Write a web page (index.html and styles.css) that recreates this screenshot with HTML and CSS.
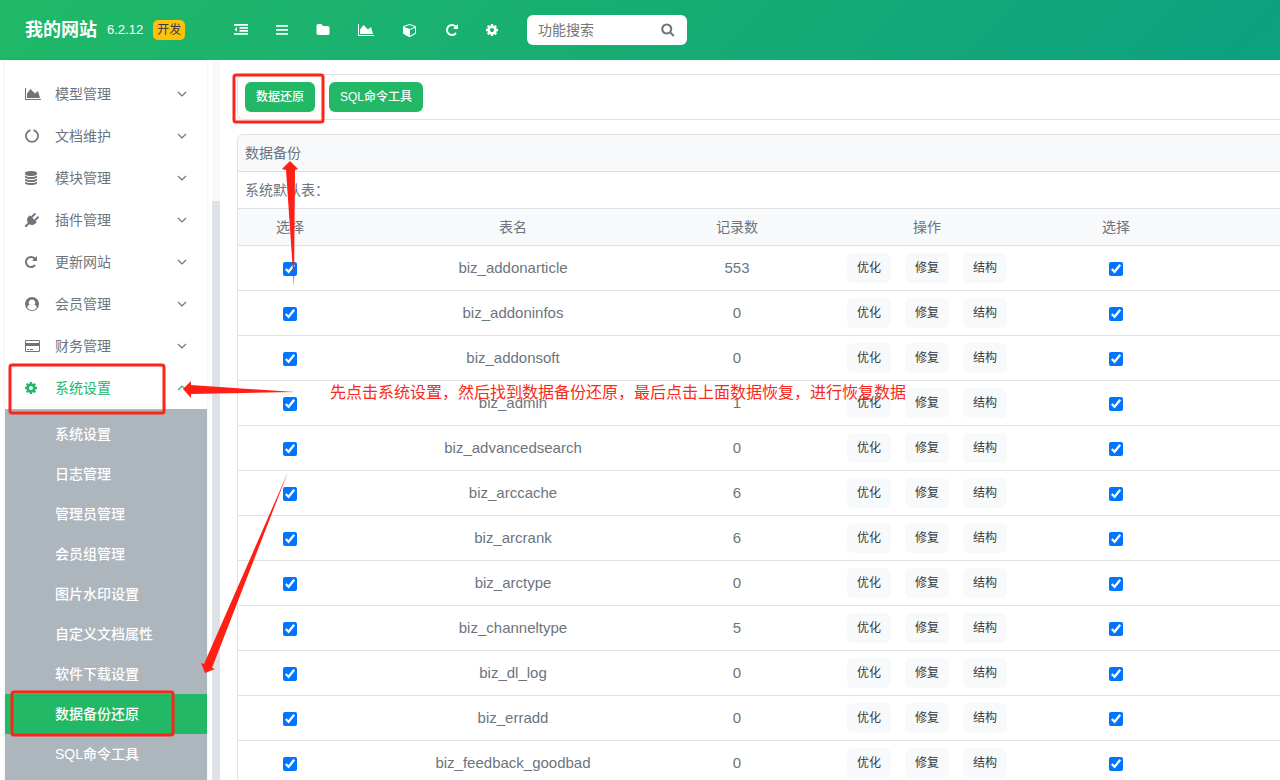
FILE: index.html
```html
<!DOCTYPE html>
<html lang="zh-CN">
<head>
<meta charset="utf-8">
<title>我的网站</title>
<link rel="stylesheet" href="styles.css">
</head>
<body>
<svg class="sprite" aria-hidden="true">
  <symbol id="i-area" viewBox="0 0 2048 1792"><path d="M2048 1536v128h-2048v-1536h128v1408h1920zm-384-1024l256 896h-1664v-576l448-576 576 576z"/></symbol>
  <symbol id="i-outdent" viewBox="0 0 1792 1792"><path d="M0 128h1792v224H0zM704 512h1088v224H704zM704 896h1088v224H704zM0 1280h1792v224H0zM384 512v608L64 816z"/></symbol>
  <symbol id="i-bars" viewBox="0 0 1536 1792"><path d="M0 256h1536v224H0zM0 768h1536v224H0zM0 1280h1536v224H0z"/></symbol>
  <symbol id="i-folder" viewBox="0 0 1792 1792"><path d="M1728 608v704q0 92-66 158t-158 66h-1216q-92 0-158-66t-66-158v-960q0-92 66-158t158-66h320q92 0 158 66t66 158v32h672q92 0 158 66t66 158z"/></symbol>
  <symbol id="i-cube" viewBox="0 0 1792 1792"><path d="M896 1629l640-349v-636l-640 233v752zm-64-865l698-254-698-254-698 254zm832-252v768q0 35-18 65t-49 47l-704 384q-28 16-61 16t-61-16l-704-384q-31-17-49-47t-18-65v-768q0-40 23-73t61-47l704-256q22-8 44-8t44 8l704 256q38 14 61 47t23 73z"/></symbol>
  <symbol id="i-repeat" viewBox="128 0 1536 1792"><path d="M1664 256v448q0 26-19 45t-45 19h-448q-42 0-59-40-17-39 14-69l138-138q-148-137-349-137-104 0-198.500 40.500t-163.500 109.500-109.500 163.500-40.500 198.500 40.500 198.500 109.500 163.500 163.500 109.500 198.500 40.500q119 0 225-52t179-147q7-10 23-12 15 0 25 9l137 138q9 8 9.500 20.500t-7.500 22.500q-109 132-264 204.500t-327 72.500q-156 0-298-61t-245-164-164-245-61-298 61-298 164-245 245-164 298-61q147 0 284.500 55.500t244.500 156.500l130-129q29-31 70-14 39 17 39 59z"/></symbol>
  <symbol id="i-cog" viewBox="128 0 1536 1792"><path d="M1152 896q0-106-75-181t-181-75-181 75-75 181 75 181 181 75 181-75 75-181zm512-109v222q0 12-8 23t-20 13l-185 28q-19 54-39 91 35 50 107 138 10 12 10 25t-9 23q-27 37-99 108t-94 71q-12 0-26-9l-138-108q-44 23-91 38-16 136-29 186-7 28-36 28h-222q-14 0-24.500-8.500t-11.500-21.500l-28-184q-49-16-90-37l-141 107q-10 9-25 9-14 0-25-11-126-114-165-168-7-10-7-23 0-12 8-23 15-21 51-66.500t54-70.500q-27-50-41-99l-183-27q-13-2-21-12.500t-8-23.500v-222q0-12 8-23t19-13l186-28q14-46 39-92-40-57-107-138-10-12-10-24 0-10 9-23 26-36 98.500-107.500t94.500-71.500q13 0 26 10l138 107q44-23 91-38 16-136 29-186 7-28 36-28h222q14 0 24.500 8.500t11.500 21.500l28 184q49 16 90 37l142-107q9-9 24-9 13 0 25 10 129 119 165 170 7 8 7 22 0 12-8 23-15 21-51 66.500t-54 70.500q26 50 41 98l183 28q13 2 21 12.500t8 23.500z"/></symbol>
  <symbol id="i-search" viewBox="64 64 1728 1792"><path d="M1216 832q0-185-131.500-316.500t-316.500-131.500-316.500 131.500-131.500 316.500 131.500 316.500 316.500 131.500 316.500-131.500 131.500-316.500zm512 832q0 52-38 90t-90 38q-54 0-90-38l-343-342q-179 124-399 124-143 0-273.500-55.500t-225-150-150-225-55.500-273.500 55.500-273.500 150-225 225-150 273.500-55.500 273.500 55.500 225 150 150 225 55.500 273.500q0 220-124 399l343 343q37 37 37 90z"/></symbol>
  <symbol id="i-notch" viewBox="0 0 14 14"><path d="M5.500 1.100A6 6 0 1 0 8.500 1.100" fill="none" stroke="currentColor" stroke-width="1.700"/></symbol>
  <symbol id="i-database" viewBox="128 0 1536 1792"><path d="M896 768q237 0 443-43t325-127v170q0 69-103 128t-280 93.500-385 34.500-385-34.500-280-93.500-103-128v-170q119 84 325 127t443 43zm0 768q237 0 443-43t325-127v170q0 69-103 128t-280 93.500-385 34.500-385-34.500-280-93.500-103-128v-170q119 84 325 127t443 43zm0-384q237 0 443-43t325-127v170q0 69-103 128t-280 93.500-385 34.500-385-34.500-280-93.500-103-128v-170q119 84 325 127t443 43zm0-1152q208 0 385 34.500t280 93.500 103 128v128q0 69-103 128t-280 93.500-385 34.500-385-34.500-280-93.500-103-128v-128q0-69 103-128t280-93.500 385-34.500z"/></symbol>
  <symbol id="i-plug" viewBox="0 0 1792 1792"><path d="M1755 453q37 38 37 90.500t-37 90.500l-401 400 150 150-160 160q-163 163-389.500 186.500t-411.500-100.500l-362 362h-181v-181l362-362q-124-185-100.500-411.500t186.500-389.500l160-160 150 150 400-401q38-37 91-37t90 37 37 90.500-37 90.500l-400 401 234 234 401-400q38-37 91-37t90 37z"/></symbol>
  <symbol id="i-user" viewBox="0 0 14 14"><path fill-rule="evenodd" d="M7 0a7 7 0 1 1 0 14A7 7 0 0 1 7 0zM7 2.500A3.200 3.200 0 0 0 4.700 8C3.200 8.200 2.300 9.200 2.100 10.600A6 6 0 0 0 11.900 10.600C11.700 9.200 10.800 8.200 9.300 8A3.200 3.200 0 0 0 7 2.500z"/></symbol>
  <symbol id="i-card" viewBox="0 0 15 14"><path fill-rule="evenodd" d="M1.300 1h12.400A1.300 1.300 0 0 1 15 2.300v9.400A1.300 1.300 0 0 1 13.700 13H1.300A1.300 1.300 0 0 1 0 11.700V2.300A1.300 1.300 0 0 1 1.300 1zM1 2v2h13V2zM1 7v5h13V7zM2 10h2v1H2zM5 10h3v1H5z"/></symbol>
  <symbol id="i-down" viewBox="0 0 10 10"><path d="M1 3l4 4 4-4" fill="none" stroke="currentColor" stroke-width="1.200"/></symbol>
  <symbol id="i-up" viewBox="0 0 10 10"><path d="M1 7l4-4 4 4" fill="none" stroke="currentColor" stroke-width="1.200"/></symbol>
</svg>

<header class="topbar">
  <div class="brand">
    <strong class="brand-name">我的网站</strong>
    <span class="version">6.2.12</span>
    <span class="badge">开发</span>
  </div>
  <nav class="tools" aria-label="快捷工具">
    <button type="button" aria-label="收起菜单"><svg class="icon"><use href="#i-outdent"/></svg></button>
    <button type="button" aria-label="菜单"><svg class="icon icon-narrow"><use href="#i-bars"/></svg></button>
    <button type="button" aria-label="文件"><svg class="icon"><use href="#i-folder"/></svg></button>
    <button type="button" aria-label="统计"><svg class="icon icon-wide"><use href="#i-area"/></svg></button>
    <button type="button" aria-label="模块"><svg class="icon icon-wide"><use href="#i-cube"/></svg></button>
    <button type="button" aria-label="刷新"><svg class="icon icon-narrow"><use href="#i-repeat"/></svg></button>
    <button type="button" aria-label="设置"><svg class="icon icon-narrow"><use href="#i-cog"/></svg></button>
  </nav>
  <form class="search" role="search">
    <input type="text" placeholder="功能搜索" aria-label="功能搜索">
    <button type="button" aria-label="搜索"><svg class="icon"><use href="#i-search"/></svg></button>
  </form>
</header>

<div class="layout">
  <nav class="sidebar" aria-label="主菜单">
    <a class="item" href="#"><span class="mark"><svg class="icon icon-wide"><use href="#i-area"/></svg></span><span class="label">模型管理</span><svg class="caret"><use href="#i-down"/></svg></a>
    <a class="item" href="#"><span class="mark"><svg class="icon"><use href="#i-notch"/></svg></span><span class="label">文档维护</span><svg class="caret"><use href="#i-down"/></svg></a>
    <a class="item" href="#"><span class="mark"><svg class="icon icon-narrow"><use href="#i-database"/></svg></span><span class="label">模块管理</span><svg class="caret"><use href="#i-down"/></svg></a>
    <a class="item" href="#"><span class="mark"><svg class="icon"><use href="#i-plug"/></svg></span><span class="label">插件管理</span><svg class="caret"><use href="#i-down"/></svg></a>
    <a class="item" href="#"><span class="mark"><svg class="icon icon-narrow"><use href="#i-repeat"/></svg></span><span class="label">更新网站</span><svg class="caret"><use href="#i-down"/></svg></a>
    <a class="item" href="#"><span class="mark"><svg class="icon"><use href="#i-user"/></svg></span><span class="label">会员管理</span><svg class="caret"><use href="#i-down"/></svg></a>
    <a class="item" href="#"><span class="mark"><svg class="icon icon-card"><use href="#i-card"/></svg></span><span class="label">财务管理</span><svg class="caret"><use href="#i-down"/></svg></a>
    <a class="item open" href="#"><span class="mark"><svg class="icon icon-narrow"><use href="#i-cog"/></svg></span><span class="label">系统设置</span><svg class="caret"><use href="#i-up"/></svg></a>
    <div class="submenu">
      <a href="#">系统设置</a>
      <a href="#">日志管理</a>
      <a href="#">管理员管理</a>
      <a href="#">会员组管理</a>
      <a href="#">图片水印设置</a>
      <a href="#">自定义文档属性</a>
      <a href="#">软件下载设置</a>
      <a class="current" href="#">数据备份还原</a>
      <a href="#">SQL命令工具</a>
    </div>
  </nav>
  <div class="track"><div class="thumb"></div></div>

  <main class="content">
    <div class="actions">
      <button type="button">数据还原</button>
      <button type="button">SQL命令工具</button>
    </div>
    <section class="panel">
      <h1 class="panel-title">数据备份</h1>
      <p class="panel-note">系统默认表：</p>
      <table class="tables">
        <colgroup><col class="c-pick"><col class="c-name"><col class="c-count"><col class="c-ops"><col class="c-pick"><col></colgroup>
        <thead><tr><th>选择</th><th>表名</th><th>记录数</th><th>操作</th><th>选择</th><th></th></tr></thead>
        <tbody>
          <tr><td><input type="checkbox" checked aria-label="biz_addonarticle"></td><td>biz_addonarticle</td><td>553</td><td><div class="ops"><button type="button">优化</button><button type="button">修复</button><button type="button">结构</button></div></td><td><input type="checkbox" checked aria-label="选择"></td><td></td></tr>
          <tr><td><input type="checkbox" checked aria-label="biz_addoninfos"></td><td>biz_addoninfos</td><td>0</td><td><div class="ops"><button type="button">优化</button><button type="button">修复</button><button type="button">结构</button></div></td><td><input type="checkbox" checked aria-label="选择"></td><td></td></tr>
          <tr><td><input type="checkbox" checked aria-label="biz_addonsoft"></td><td>biz_addonsoft</td><td>0</td><td><div class="ops"><button type="button">优化</button><button type="button">修复</button><button type="button">结构</button></div></td><td><input type="checkbox" checked aria-label="选择"></td><td></td></tr>
          <tr><td><input type="checkbox" checked aria-label="biz_admin"></td><td>biz_admin</td><td>1</td><td><div class="ops"><button type="button">优化</button><button type="button">修复</button><button type="button">结构</button></div></td><td><input type="checkbox" checked aria-label="选择"></td><td></td></tr>
          <tr><td><input type="checkbox" checked aria-label="biz_advancedsearch"></td><td>biz_advancedsearch</td><td>0</td><td><div class="ops"><button type="button">优化</button><button type="button">修复</button><button type="button">结构</button></div></td><td><input type="checkbox" checked aria-label="选择"></td><td></td></tr>
          <tr><td><input type="checkbox" checked aria-label="biz_arccache"></td><td>biz_arccache</td><td>6</td><td><div class="ops"><button type="button">优化</button><button type="button">修复</button><button type="button">结构</button></div></td><td><input type="checkbox" checked aria-label="选择"></td><td></td></tr>
          <tr><td><input type="checkbox" checked aria-label="biz_arcrank"></td><td>biz_arcrank</td><td>6</td><td><div class="ops"><button type="button">优化</button><button type="button">修复</button><button type="button">结构</button></div></td><td><input type="checkbox" checked aria-label="选择"></td><td></td></tr>
          <tr><td><input type="checkbox" checked aria-label="biz_arctype"></td><td>biz_arctype</td><td>0</td><td><div class="ops"><button type="button">优化</button><button type="button">修复</button><button type="button">结构</button></div></td><td><input type="checkbox" checked aria-label="选择"></td><td></td></tr>
          <tr><td><input type="checkbox" checked aria-label="biz_channeltype"></td><td>biz_channeltype</td><td>5</td><td><div class="ops"><button type="button">优化</button><button type="button">修复</button><button type="button">结构</button></div></td><td><input type="checkbox" checked aria-label="选择"></td><td></td></tr>
          <tr><td><input type="checkbox" checked aria-label="biz_dl_log"></td><td>biz_dl_log</td><td>0</td><td><div class="ops"><button type="button">优化</button><button type="button">修复</button><button type="button">结构</button></div></td><td><input type="checkbox" checked aria-label="选择"></td><td></td></tr>
          <tr><td><input type="checkbox" checked aria-label="biz_erradd"></td><td>biz_erradd</td><td>0</td><td><div class="ops"><button type="button">优化</button><button type="button">修复</button><button type="button">结构</button></div></td><td><input type="checkbox" checked aria-label="选择"></td><td></td></tr>
          <tr><td><input type="checkbox" checked aria-label="biz_feedback_goodbad"></td><td>biz_feedback_goodbad</td><td>0</td><td><div class="ops"><button type="button">优化</button><button type="button">修复</button><button type="button">结构</button></div></td><td><input type="checkbox" checked aria-label="选择"></td><td></td></tr>
        </tbody>
      </table>
    </section>
  </main>
</div>

<svg class="marks" width="1280" height="780" aria-hidden="true">
  <g class="frames">
    <rect x="234" y="75" width="89" height="47" rx="2"/>
    <rect x="10" y="365" width="154" height="48" rx="2"/>
    <rect x="12" y="692" width="161" height="43" rx="2"/>
  </g>
  <g class="arrows">
    <path d="M290 161l8 8-3 1-1 117-8-117-4-1z"/>
    <path d="M183 389l8-8v4l104 7-104 2v4z"/>
    <path d="M288 472L212 668l3 1-10 4-4-10 3 1z"/>
  </g>
</svg>
<p class="hint">先点击系统设置，然后找到数据备份还原，最后点击上面数据恢复，进行恢复数据</p>
</body>
</html>
```
FILE: styles.css
```css
* { box-sizing: border-box; }

body {
  margin: 0;
  height: 100vh;
  display: flex;
  flex-direction: column;
  overflow: hidden;
  position: relative;
  background: #fff;
  color: #6c757d;
  font: 14px/20px "Liberation Sans", "Noto Sans CJK SC", sans-serif;
}

button { font: inherit; color: inherit; border: 0; padding: 0; background: none; cursor: pointer; }
a { color: inherit; text-decoration: none; }

.sprite { display: none; }
.icon { display: block; width: 14px; height: 14px; fill: currentColor; }
.icon-narrow { width: 12px; }
.icon-wide { width: 16px; }
.icon-card { width: 15px; }

.topbar {
  flex: none;
  height: 60px;
  display: flex;
  align-items: center;
  background: linear-gradient(135deg, #20b967, #0ca180);
  color: #fff;
}
.brand { width: 220px; padding-left: 25px; display: flex; align-items: center; gap: 10px; }
.brand-name { font-size: 18px; }
.version { font-size: 13px; }
.badge {
  padding: 0 4px;
  border-radius: 5px;
  background: #ffc107;
  color: #343a40;
  font-size: 12px;
}
.tools { display: flex; align-items: center; gap: 28px; padding-left: 14px; }
.search {
  width: 160px;
  height: 30px;
  margin-left: 29px;
  padding: 0 12px 0 11px;
  display: flex;
  align-items: center;
  border-radius: 6px;
  background: #fff;
  color: #6c757d;
}
.search input { flex: 1; min-width: 0; border: 0; padding: 0; outline: 0; background: none; font: inherit; }
.search input::placeholder { color: #757575; }

.layout { flex: 1; min-height: 0; display: flex; }
.sidebar {
  flex: none;
  width: 202px;
  margin-left: 5px;
  padding-top: 13px;
  overflow: hidden;
  box-shadow: 0 0 3px rgba(0, 0, 0, 0.1);
}
.item { display: flex; align-items: center; height: 42px; padding: 0 20px; }
.mark { width: 30px; }
.label { flex: 1; }
.caret { width: 10px; height: 10px; }
.open { color: #22b866; }
.submenu { padding: 5px 0 20px; background: #adb5bd; color: #fff; font-weight: 500; }
.submenu a { display: block; padding: 10px 50px; }
.submenu .current { background: #22b866; }

.track { flex: none; width: 8px; margin-left: 5px; padding-top: 141px; background: #f8f9fa; }
.thumb { height: 100%; background: #dee2e6; }

.content { flex: 1; min-width: 0; padding: 14px 0 0 17px; overflow: hidden; }
.actions {
  display: flex;
  gap: 14px;
  padding: 7px;
  border: 1px solid #dee2e6;
  border-right: 0;
  border-radius: 6px 0 0 6px;
}
.actions button {
  height: 30px;
  padding: 0 11px;
  border-radius: 6px;
  background: #22b866;
  color: #fff;
  font-size: 12px;
  font-weight: 500;
}
.panel {
  margin-top: 14px;
  border: 1px solid #dee2e6;
  border-width: 1px 0 0 1px;
  border-radius: 6px 0 0 0;
  overflow: hidden;
}
.panel-title, .panel-note {
  margin: 0;
  padding: 8px 7px;
  border-bottom: 1px solid #dee2e6;
  font-size: 14px;
  font-weight: 400;
}
.panel-title { background: #f8f9fb; }

.tables { width: 100%; table-layout: fixed; border-collapse: separate; border-spacing: 0; text-align: center; }
.c-pick { width: 104px; }
.c-name { width: 342px; }
.c-count { width: 106px; }
.c-ops { width: 274px; }
.tables th { padding: 8px 0; border-bottom: 1px solid #dee2e6; background: #f8f9fb; font-weight: 400; }
.tables td { padding: 7px 0; border-bottom: 1px solid #dee2e6; font-size: 15px; }
.tables input { display: block; width: 14px; height: 14px; margin: 2px auto 0; accent-color: #0075ff; }
.ops { display: flex; justify-content: center; gap: 14px; }
.ops button {
  width: 44px;
  height: 30px;
  border-radius: 6px;
  background: #f8f9fa;
  color: #343a40;
  font-size: 12px;
}

.marks { position: absolute; top: 0; left: 0; pointer-events: none; }
.frames rect { fill: none; stroke: #fb2518; stroke-width: 3; }
.arrows path { fill: #ff2015; }
.hint {
  position: absolute;
  top: 381px;
  left: 330px;
  margin: 0;
  color: #f82a20;
  font-size: 16px;
  line-height: 24px;
  white-space: nowrap;
}
```
